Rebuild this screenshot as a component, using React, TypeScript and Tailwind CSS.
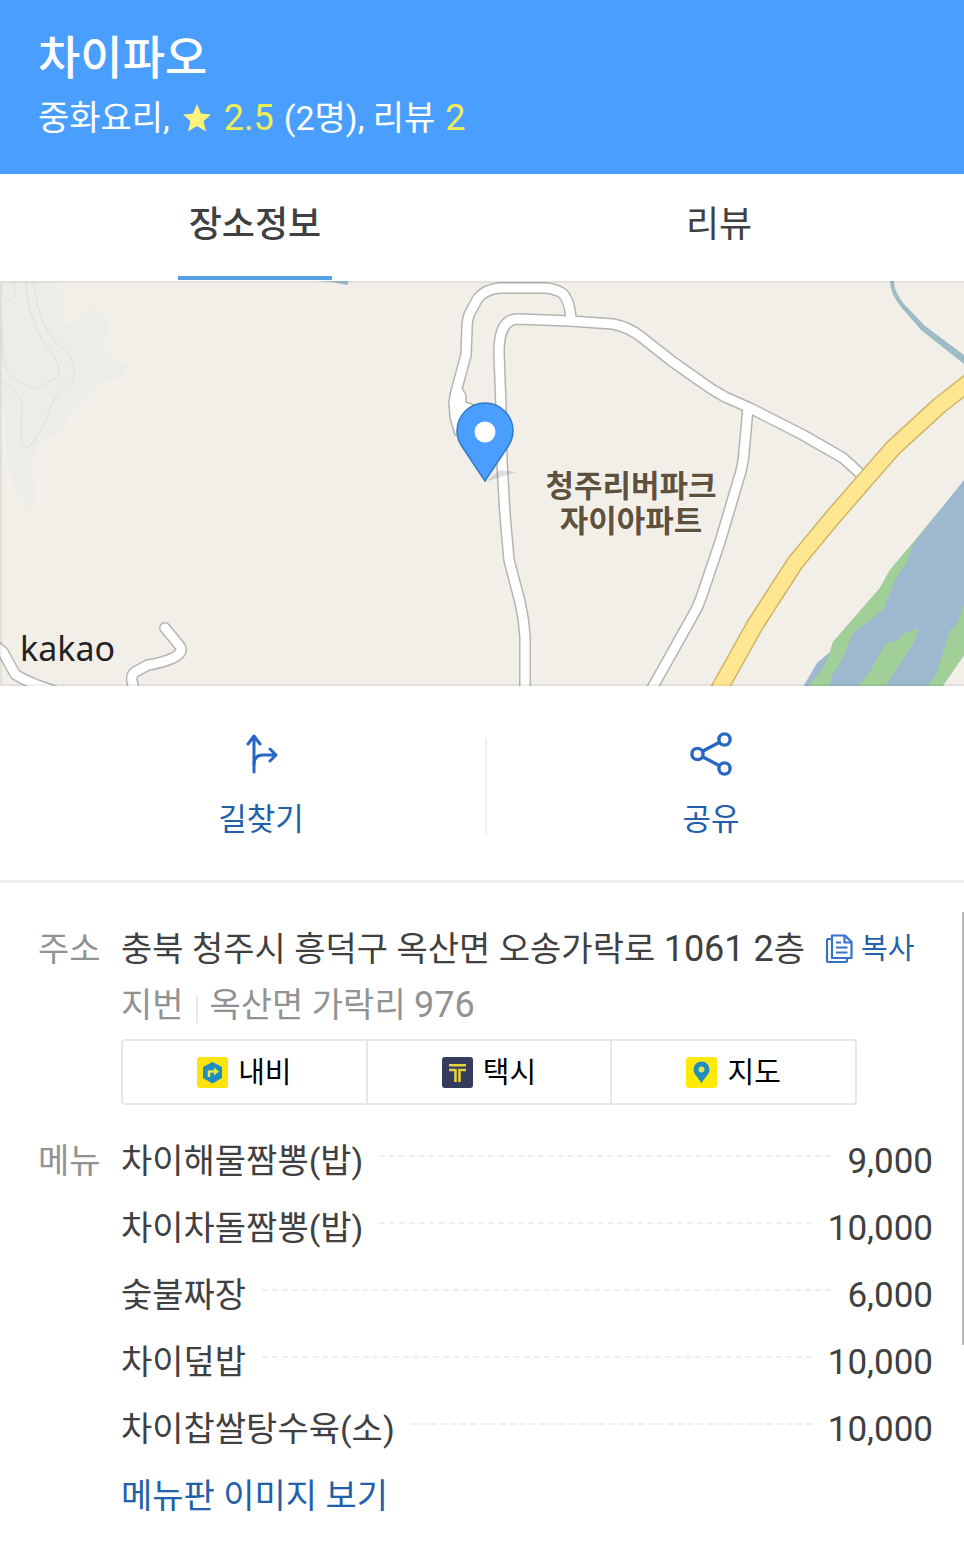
import type { ReactNode } from 'react';

const menuItems = [
  { name: '차이해물짬뽕(밥)', price: '9,000' },
  { name: '차이차돌짬뽕(밥)', price: '10,000' },
  { name: '숯불짜장', price: '6,000' },
  { name: '차이덮밥', price: '10,000' },
  { name: '차이찹쌀탕수육(소)', price: '10,000' },
];

const roads = [
  'M-4 365 L3 371 L15 393 Q20 397 37 404 L60 412',
  'M165 347 L179 364 Q185 371 173 377 Q162 382 148 384 L135 391 Q131 394 132 400 L135 412',
  'M457 137 L454 122 L457 107 L466 74 L467 48 Q467 36 471 30 L478 17 Q486 8 500 7 L545 7 Q556 8 562 12 Q570 19 571 39',
  'M748 127 L744 171 Q743 186 738 200 L720 261 L701 317 Q698 326 692 336 L650 411',
  'M525 410 L525 356 Q524 338 520 321 L509 279 L505 234 L502 181 L501 127 L499 71 Q499 38 518 38 L570 40 L613 43 Q628 46 640 55 L673 81 L700 100 Q712 109 725 116 L750 127 L803 154 L843 177 L864 196',
];

const highway = 'M972 99 L940 124 L893 167 L833 236 L795 282 L755 344 L717 412';

function MapView() {
  return (
    <svg viewBox="0 0 964 405" preserveAspectRatio="xMidYMid slice" className="block h-[405px] w-full" role="img" aria-label="지도">
      <rect width="964" height="405" fill="#f2efe8" />
      {/* hills */}
      <path d="M0 0 H57 V38 Q57 46 63 45 L90 30 Q96 27 102 32 Q111 38 109 52 L103 66 Q104 73 110 76 L124 83 Q131 88 120 96 L95 104 Q94 110 88 118 L70 132 Q66 142 60 149 L41 163 Q33 170 33 181 L35 218 Q35 226 30 225 Q24 224 18 213 Q8 195 7 174 L5 131 L0 124 Z" fill="#ebede6" />
      <g fill="none" stroke="#dfdfd7">
        <path d="M0 10 Q6 20 11 20 Q16 18 14 0" />
        <path d="M26 0 L28 24 L39 54 L55 77 Q61 88 58 95 Q56 98 36 108 Q30 107 25 104 Q12 97 7 90 Q2 80 2 44" />
        <path d="M33 0 L38 26 Q42 41 50 54 Q56 64 68 72 Q77 87 73 100 L57 114 Q51 124 43 146 L30 165 Q26 169 22 162 Q20 157 21 148 L22 121 Q17 110 0 99" />
      </g>
      {/* stream */}
      <path d="M317 0 H348 V4 L341 3 L333 1 Z" fill="#9db9cd" />
      <path d="M890 0 H894 Q894 11 904 23 L925 45 L964 74 V83 L921 49 L901 26 Q890 12 890 0 Z" fill="#9ebcc6" />
      {/* river */}
      <path d="M964 199 L940 229 L917 257 L890 289 L880 307 L833 361 L830 371 L817 382 L803 406 H942 L964 374 Z" fill="#9db8cf" />
      <path d="M942 226 L917 257 L890 289 L880 307 L833 361 L830 371 L825 384 L808 406 H829 L832 394 L842 379 L853 352 L883 329 L895 299 L907 281 L913 264 Z" fill="#a0d098" />
      <path d="M918 347 Q918 354 912 364 L885 406 H857 L870 391 L885 363 L898 359 L905 352 Z" fill="#a0d098" />
      <path d="M964 322 L957 344 L950 349 L937 391 L927 406 H942 L964 374 Z" fill="#a0d098" />
      {/* roads: outline first, surface on top */}
      <g fill="none" stroke="#b4b4b1" strokeWidth="12" strokeLinecap="round" strokeLinejoin="round">
        {roads.map((d) => <path key={d} d={d} />)}
      </g>
      <path d="M451 109 L462 107 L466 114 V121 L472 123 L483 134 L455 154 L450 137 L449 122 Z" fill="#fff" stroke="#b4b4b1" strokeWidth="1.5" />
      <g fill="none" stroke="#fff" strokeWidth="9" strokeLinecap="round" strokeLinejoin="round">
        {roads.map((d) => <path key={d} d={d} />)}
      </g>
      <g fill="none" strokeLinejoin="round">
        <path d={highway} stroke="#cfb568" strokeWidth="18" />
        <path d={highway} stroke="#ffe791" strokeWidth="15" />
      </g>
      {/* marker */}
      <path d="M485 201 L500 189 L517 191 Z" fill="#000" opacity="0.12" />
      <path d="M485 200 L461 164 C457 157 457 152 457 150 A28 28 0 0 1 513 150 C513 152 513 157 509 164 Z" fill="#4a9ffe" stroke="#2f7cc9" strokeWidth="1.5" />
      <circle cx="485" cy="151" r="10.5" fill="#fff" />
      <g fill="#60513d" fontSize="31" fontWeight="700" textAnchor="middle" stroke="#f7f5f0" strokeWidth="2" paintOrder="stroke">
        <text x="631" y="216">청주리버파크</text>
        <text x="631" y="251">자이아파트</text>
      </g>
      <text x="20" y="380" fontSize="34" fill="#222" className="font-['Noto_Sans',sans-serif]">kakao</text>
      <path d="M0 1 H964 M0 404 H964 M1 0 V405" stroke="#000" strokeOpacity="0.06" strokeWidth="2" />
    </svg>
  );
}

function RouteIcon() {
  return (
    <svg width="34" height="44" viewBox="0 0 34 44" fill="none" stroke="#2867c4" strokeWidth="3" strokeLinecap="round" strokeLinejoin="round" aria-hidden="true">
      <path d="M10 40 V4 M4 12 L10 4 L16 12" />
      <path d="M10 32 Q10 23 19 23 H32 M26 17 L32 23 L26 29" />
    </svg>
  );
}

function ShareIcon() {
  return (
    <svg width="44" height="44" viewBox="0 0 44 44" fill="none" stroke="#2867c4" strokeWidth="3.4" aria-hidden="true">
      <circle cx="8.5" cy="22" r="5.6" />
      <circle cx="35.5" cy="7.5" r="5.6" />
      <circle cx="35.5" cy="36.5" r="5.6" />
      <path d="M13.5 19.3 L30.5 10.2 M13.5 24.7 L30.5 33.8" />
    </svg>
  );
}

function CopyIcon() {
  return (
    <svg width="28" height="30" viewBox="0 0 28 30" fill="none" stroke="#3672c8" strokeWidth="2.2" strokeLinejoin="round" aria-hidden="true">
      <path d="M6 5 H3 Q2 5 2 6 V27 Q2 28 3 28 H21 Q22 28 22 27 V25" />
      <path d="M7 1.5 H20 L26.5 8 V24 H7 V1.5 Z" />
      <path d="M19.5 2 V8.5 H26 M11 8.5 H16 M11 13.5 H22.5 M11 18.5 H22.5" />
    </svg>
  );
}

function NaviIcon() {
  return (
    <svg width="31" height="31" viewBox="0 0 31 31" aria-hidden="true">
      <rect width="31" height="31" rx="3" fill="#fbe30c" />
      <path d="M15.5 5 L25 10 V21 L15.5 26.5 L6 21 V10 Z" fill="#1f8bc0" />
      <path d="M12 20 V14.5 H19" fill="none" stroke="#e5e84a" strokeWidth="2.6" />
      <path d="M17 10.5 L22 14.5 L17 18.5 Z" fill="#e5e84a" />
    </svg>
  );
}

function TaxiIcon() {
  return (
    <svg width="31" height="31" viewBox="0 0 31 31" aria-hidden="true">
      <rect width="31" height="31" rx="3" fill="#343b5c" />
      <path d="M7 8.3 H24 M7 13 H13.5 V25 M24 13 H17.5 V25" fill="none" stroke="#e6d33a" strokeWidth="2.6" />
    </svg>
  );
}

function MapPinIcon() {
  return (
    <svg width="31" height="31" viewBox="0 0 31 31" aria-hidden="true">
      <rect width="31" height="31" rx="3" fill="#feea02" />
      <path d="M15.5 27 C14.5 22 7.5 18 7.5 12.5 A8 8 0 0 1 23.5 12.5 C23.5 18 16.5 22 15.5 27 Z" fill="#1f8bc0" />
      <circle cx="15.5" cy="12.5" r="3" fill="#dfe64a" />
    </svg>
  );
}

const kakaoLinks: { label: string; icon: ReactNode }[] = [
  { label: '내비', icon: <NaviIcon /> },
  { label: '택시', icon: <TaxiIcon /> },
  { label: '지도', icon: <MapPinIcon /> },
];

export default function App() {
  return (
    <div lang="ko" className="relative min-h-screen bg-white pb-4 font-['Roboto','Noto_Sans_CJK_KR',sans-serif] text-[34px] text-[#404040]">
      <header className="h-[174px] bg-[#4a9ffe] px-[38px] pt-[26px] text-white">
        <h1 className="text-[46px] leading-16 font-medium">차이파오</h1>
        <p className="flex items-center leading-14">
          <span>중화요리,</span>
          <svg width="28" height="28" viewBox="0 0 28 28" className="mx-[13px]" fill="#fff27a" aria-hidden="true">
            <path d="M14 0 L18 9.5 L28 10.5 L20.5 17.2 L23 27.5 L14 22 L5 27.5 L7.5 17.2 L0 10.5 L10 9.5 Z" />
          </svg>
          <span className="text-[36px] text-[#f1ee55]">2.5</span>
          <span className="ml-[10px]">(2명), 리뷰</span>
          <span className="ml-[10px] text-[36px] text-[#f1ee55]">2</span>
        </p>
      </header>

      <nav className="flex h-[107px] items-start pr-[13px] pl-[23px] text-[36px] leading-[102px]">
        <div className="flex flex-1 justify-center">
          <a href="#info" className="border-b-4 border-[#559fe4] px-[11px] font-medium">장소정보</a>
        </div>
        <div className="flex flex-1 justify-center">
          <a href="#review">리뷰</a>
        </div>
      </nav>

      <MapView />

      <div className="flex border-b-3 border-[#efefef] pt-[52px] pr-[29px] pb-[46px] pl-[37px] text-[31px] text-[#2260aa]">
        <a href="#route" className="flex h-24 flex-1 flex-col items-center justify-between border-r-2 border-[#f2f2f2]">
          <span className="-mt-[6px]"><RouteIcon /></span>
          <span className="leading-7">길찾기</span>
        </a>
        <button type="button" className="flex h-24 flex-1 flex-col items-center justify-between">
          <span className="-mt-[6px]"><ShareIcon /></span>
          <span className="leading-7">공유</span>
        </button>
      </div>

      <section id="info" className="flex pt-[38px] pr-[31px] pl-[38px]">
        <h2 className="w-[83px] shrink-0 leading-14 text-[#929292]">주소</h2>
        <div className="min-w-0 flex-1">
          <div className="flex items-center leading-14">
            <p>충북 청주시 흥덕구 옥산면 오송가락로 <span className="text-[36px]">1061 2</span>층</p>
            <button type="button" className="ml-5 flex items-center gap-2 text-[29px] text-[#2260aa]">
              <CopyIcon />
              복사
            </button>
          </div>
          <div className="flex items-center leading-14 text-[#929292]">
            <span>지번</span>
            <span className="mx-3 mt-2 h-7 w-[2px] bg-[#e9e9e9]"></span>
            <span>옥산면 가락리 <span className="text-[36px]">976</span></span>
          </div>
          <div className="mt-[6px] mr-[76px] flex rounded-sm border-2 border-[#e6e6e6] text-[29px] text-black">
            {kakaoLinks.map(({ label, icon }) => (
              <a key={label} href="#kakao" className="flex h-[62px] flex-1 items-center justify-center gap-[10px] border-r-2 border-[#e6e6e6] last:border-r-0">
                {icon}
                <span className="pt-1">{label}</span>
              </a>
            ))}
          </div>
        </div>
      </section>

      <section className="flex pt-[23px] pr-[31px] pl-[38px] leading-[67px]">
        <h2 className="w-[83px] shrink-0 text-[#929292]">메뉴</h2>
        <div className="flex-1">
          <ul>
            {menuItems.map((item) => (
              <li key={item.name} className="flex items-center">
                <span>{item.name}</span>
                <span className="mx-4 mb-3 flex-1 border-b-2 border-dashed border-[#efefef]"></span>
                <span className="text-[35px]">{item.price}</span>
              </li>
            ))}
          </ul>
          <a href="#menu-image" className="text-[#2260aa]">메뉴판 이미지 보기</a>
        </div>
      </section>

      {/* scroll indicator */}
      <div className="absolute top-[912px] right-0 h-[433px] w-[2px] bg-[#b9b9b9]"></div>
    </div>
  );
}
